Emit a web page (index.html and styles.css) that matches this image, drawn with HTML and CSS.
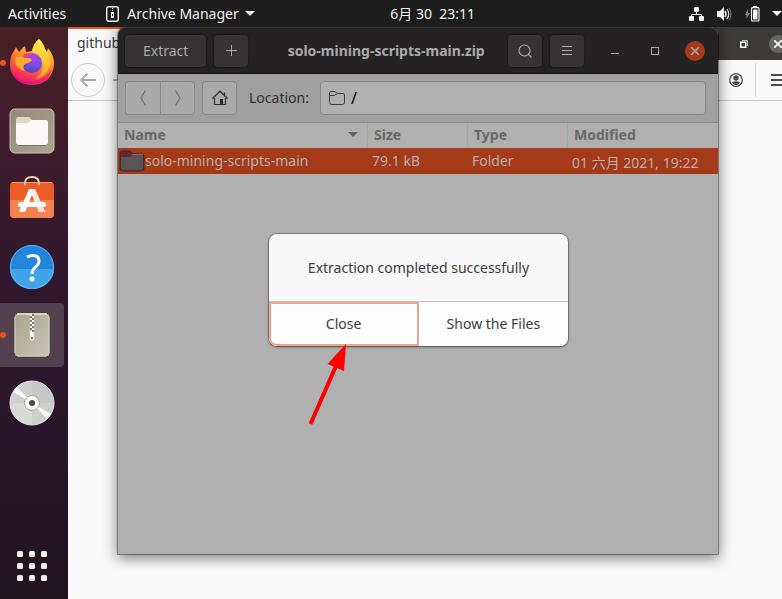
FILE: index.html
```html
<!DOCTYPE html>
<html lang="en">
<head>
<meta charset="utf-8">
<title>Archive Manager</title>
<link rel="stylesheet" href="styles.css">
</head>
<body>
<header class="topbar">
  <button class="top-item">Activities</button>
  <button class="top-item app-menu">
    <svg width="13" height="16" viewBox="0 0 13 16"><rect x=".7" y=".7" width="11.6" height="14.6" rx="2" fill="none" stroke="#f2f2f2" stroke-width="1.4"/><path d="M6 2h1v1H6zM6 4h1v1H6z" fill="#f2f2f2"/><path d="M5 6h3v6H5z" fill="#f2f2f2"/><path d="M6 8h1v2H6z" fill="#1d1d1d"/></svg>
    <span>Archive Manager</span>
    <svg width="10" height="5" viewBox="0 0 10 5"><path d="M0 0h10L5 5z" fill="#f2f2f2"/></svg>
  </button>
  <button class="top-item clock">6月 30&nbsp; 23:11</button>
  <button class="top-item tray" aria-label="System menu">
    <svg width="16" height="14" viewBox="0 0 16 14" fill="#f2f2f2"><rect x="5" y="0" width="5" height="5" rx="1"/><rect x="0" y="9" width="5" height="5" rx="1"/><rect x="10" y="9" width="5" height="5" rx="1"/><path d="M2.500 10V7.500h10V10M7.500 4v3.500" fill="none" stroke="#f2f2f2"/></svg>
    <svg width="16" height="14" viewBox="0 0 16 14"><path d="M0 4h3l4-4v14L3 10H0z" fill="#f2f2f2"/><path d="M8 4q2 3 0 6" fill="none" stroke="#f2f2f2" stroke-width="1.500"/><path d="M10 2q3.500 5 0 10" fill="none" stroke="#d0d0d0" stroke-width="1.300"/><path d="M12 1q4 6 0 12" fill="none" stroke="#777"/></svg>
    <svg width="15" height="16" viewBox="0 0 15 16"><path d="M3 3v4h2L1.500 13V9H0z" fill="#888"/><path d="M8 0h4v2H8z" fill="#f2f2f2"/><rect x="6.500" y="1.700" width="7.500" height="13.300" rx="1" fill="none" stroke="#f2f2f2" stroke-width="1.200"/><path d="M8 3.500h4.500v10H8z" fill="#f2f2f2"/></svg>
    <svg width="10" height="5" viewBox="0 0 10 5"><path d="M0 0h10L5 5z" fill="#f2f2f2"/></svg>
  </button>
</header>
<div class="desktop">
  <nav class="dock" aria-label="Dock">
    <button class="dock-item running" aria-label="Firefox">
      <svg width="46" height="48" viewBox="0 1 46 48">
        <defs>
          <linearGradient id="fx1" x1=".75" y1="0" x2=".35" y2="1"><stop offset="0" stop-color="#ffe34a"/><stop offset=".4" stop-color="#ff9a2a"/><stop offset=".72" stop-color="#ff4a45"/><stop offset="1" stop-color="#e5107c"/></linearGradient>
          <linearGradient id="fx2" x1=".6" y1="0" x2=".5" y2="1"><stop offset="0" stop-color="#fff44f"/><stop offset="1" stop-color="#ffad2c"/></linearGradient>
          <radialGradient id="fx3" cx=".6" cy=".2" r=".85"><stop offset="0" stop-color="#b83ff2"/><stop offset=".55" stop-color="#7150dc"/><stop offset="1" stop-color="#5140b6"/></radialGradient>
        </defs>
        <path d="M30 1c3 3 5 6 6 10l2 3 1-4c4 5 6 10 6 15 0 13-9 22-22 22S1 38 1 26c0-5 1-9 4-13l2-4 3 5c2-2 3-4 6-6l1 6 6-1C24 8 26 4 30 1z" fill="url(#fx1)"/>
        <path d="M30 1c3 3 5 6 6 10 3 4 5 8 5 14-1 9-7 15-15 16 6-4 9-10 7-16-1-5-5-7-10-12 1-5 3-9 7-12z" fill="url(#fx2)" opacity=".8"/>
        <circle cx="23" cy="25" r="10" fill="url(#fx3)"/>
        <path d="M7 19c4 0 8 0 10 1 2 0 5 0 6 2-2 3-6 3-8 5-1 2-1 4 1 6-5-1-9-5-10-9z" fill="#ffab31"/>
        <path d="M15 16c3-1 6-1 8 0-3 1-5 3-5 4l-4-1z" fill="#e83f76"/>
        <path d="M2 31c4 9 11 13 20 12 11 0 18-6 21-13-2 10-10 17-20 17C12 47 4 41 2 31z" fill="#e5107c" opacity=".6"/>
      </svg>
    </button>
    <button class="dock-item" aria-label="Files">
      <svg width="46" height="46" viewBox="0 0 46 46"><defs><linearGradient id="fl" x1="0" y1="0" x2="1" y2="1"><stop offset="0" stop-color="#918a79"/><stop offset="1" stop-color="#aaa491"/></linearGradient></defs><rect x="1" y="1" width="44" height="44" rx="5" fill="url(#fl)" stroke="#c9c3b2"/><path d="M7 11q0-2 2-2h11l4 4-2 4H7z" fill="#dcd8c9"/><path d="M7 15h12l4-3h14q2 0 2 2v20q0 3-3 3H10q-3 0-3-3z" fill="#f9f8f6"/><path d="M9 37.500h28" stroke="#777262"/></svg>
    </button>
    <button class="dock-item" aria-label="Ubuntu Software">
      <svg width="46" height="46" viewBox="0 2 46 46"><rect x="1" y="8" width="44" height="36" rx="4" fill="#ed5c27"/><path d="M1 26h44v14q0 4-4 4H5q-4 0-4-4z" fill="#f38350"/><path d="M3 8.500h40" stroke="#ff9b68"/><path d="M16 11V9.500q0-6.500 7-6.500t7 6.500V11" fill="none" stroke="#f3d6a8" stroke-width="1.800"/><path d="M20 15h6l10 23h-6L23 21l-7 17h-6z" fill="#fff"/><path d="M23 15h3l10 23h-6z" fill="#f6e3da"/><rect x="9" y="28" width="28" height="5" rx="2.500" fill="#fff"/></svg>
    </button>
    <button class="dock-item" aria-label="Help">
      <svg width="46" height="46" viewBox="0 0 46 46"><circle cx="23" cy="23" r="22" fill="#2187dc"/><path d="M1 25h44a22 20 0 0 1-44 0z" fill="#41a3e8"/><circle cx="23" cy="23" r="21.500" fill="none" stroke="#68b6ed"/><path d="M18 13q4-2 7-1.500 5 .5 5 5.500 0 3-4 6.500-3 3-3 6.500" fill="none" stroke="#fff" stroke-width="3"/><circle cx="23" cy="35" r="2.500" fill="#fff"/></svg>
    </button>
    <button class="dock-item running active" aria-label="Archive Manager">
      <svg width="38" height="46" viewBox="0 0 38 46"><defs><linearGradient id="ar" x1="0" y1="0" x2="1" y2="1"><stop offset="0" stop-color="#aaa38f"/><stop offset="1" stop-color="#c9c5b5"/></linearGradient></defs><rect x="1" y="1" width="36" height="44" rx="4" fill="url(#ar)" stroke="#4a4039"/><path d="M4 2h30" stroke="#efede4" stroke-width="1.500"/><path d="M4 44h30M2 5v36M36 5v36" stroke="#d8d4c6"/><path d="M17 2h4v26h-4z" fill="#7d7868"/><path d="M18 2v20" stroke="#fff" stroke-width="2" stroke-dasharray="2 2"/><path d="M20 4v18" stroke="#fff" stroke-width="2" stroke-dasharray="2 2"/><path d="M17 20h4v8h-4z" fill="#fff"/><path d="M18 25h2v2h-2z" fill="#7d7868"/></svg>
    </button>
    <button class="dock-item" aria-label="Disc">
      <svg width="46" height="46" viewBox="0 0 46 46"><circle cx="23" cy="23" r="22" fill="#cfcfcf" stroke="#e6e6e6"/><path d="M23 23V1a22 22 0 0 1 22 22z" fill="#c7c7c7"/><path d="M23 23V45A22 22 0 0 1 1 23z" fill="#d9d9d9"/><path d="M23 23 4 12q2-4 4-5zM23 23l19 11q-2 4-4 5z" fill="#f7f7f7"/><circle cx="23" cy="23" r="7.500" fill="#fafafa" stroke="#aaa28e"/><circle cx="23" cy="23" r="3" fill="#4a4a48"/></svg>
    </button>
    <button class="dock-item apps" aria-label="Show Applications">
      <svg width="30" height="30" viewBox="0 0 30 30" fill="#f0eeee"><rect width="6" height="6" rx="1.500"/><rect x="12" width="6" height="6" rx="1.500"/><rect x="24" width="6" height="6" rx="1.500"/><rect y="12" width="6" height="6" rx="1.500"/><rect x="12" y="12" width="6" height="6" rx="1.500"/><rect x="24" y="12" width="6" height="6" rx="1.500"/><rect y="24" width="6" height="6" rx="1.500"/><rect x="12" y="24" width="6" height="6" rx="1.500"/><rect x="24" y="24" width="6" height="6" rx="1.500"/></svg>
    </button>
  </nav>
  <main class="workspace">
    <section class="browser" aria-label="Browser">
      <div class="tabstrip">
        <div class="tab">github</div>
        <button class="browser-restore" aria-label="Restore"><svg width="8" height="8" viewBox="0 0 8 8" fill="none"><path d="M2 .5h5.500V6" stroke="#bbb"/><rect x=".75" y="2.250" width="5" height="5" stroke="#fff" stroke-width="1.500"/></svg></button>
        <button class="browser-close" aria-label="Close browser"><svg width="8" height="8" viewBox="0 0 8 8"><path d="m0 0 8 8M8 0 0 8" stroke="#fff" stroke-width="1.600"/></svg></button>
      </div>
      <div class="navbar">
        <button class="back" aria-label="Back"><svg width="16" height="14" viewBox="0 0 16 14"><path d="M16 7H1M7.500 0.500 1 7l6.500 6.500" fill="none" stroke="#a8a8a8" stroke-width="1.800"/></svg></button>
        <button class="plain" aria-label="Forward"><svg width="16" height="14" viewBox="0 0 16 14"><path d="M0 7h15M8.500.5 15 7l-6.500 6.500" fill="none" stroke="#aaa" stroke-width="1.800"/></svg></button>
        <button class="plain account" aria-label="Account"><svg width="14" height="14" viewBox="0 0 14 14"><circle cx="7" cy="7" r="6.300" fill="none" stroke="#4c4c4c" stroke-width="1.300"/><circle cx="7" cy="5" r="2.700" fill="#4c4c4c"/><path d="M3 9q4-1.500 8 0-1 3-4 3T3 9z" fill="#4c4c4c"/></svg></button>
        <button class="plain main-menu" aria-label="Menu"><svg width="16" height="12" viewBox="0 0 16 12"><path d="M0 1h16M0 6h16M0 11h16" stroke="#4c4c4c" stroke-width="2"/></svg></button>
      </div>
    </section>

    <section class="window" aria-label="solo-mining-scripts-main.zip">
      <header class="titlebar">
        <button class="tool">Extract</button>
        <button class="tool square" aria-label="Add files"><svg width="11" height="11" viewBox="0 0 11 11"><path d="M0 5.500h11M5.500 0v11" stroke="#aaa"/></svg></button>
        <h1 class="title">solo-mining-scripts-main.zip</h1>
        <button class="tool square" aria-label="Search"><svg width="14" height="14" viewBox="0 0 14 14" fill="none" stroke="#aaa" stroke-width="1.200"><circle cx="6.500" cy="6.500" r="5.500"/><path d="m10 10 3.500 3.500"/></svg></button>
        <button class="tool square" aria-label="Menu"><svg width="10" height="10" viewBox="0 0 10 10"><path d="M0 .5h10M0 4.500h10M0 8.500h10" stroke="#b0b0b0"/></svg></button>
        <div class="controls">
          <button class="control" aria-label="Minimize"><svg width="8" height="8" viewBox="0 0 8 8"><path d="M0 6.500h8" stroke="#aaa"/></svg></button>
          <button class="control" aria-label="Maximize"><svg width="8" height="8" viewBox="0 0 8 8"><rect x=".5" y=".5" width="7" height="7" fill="none" stroke="#aaa"/></svg></button>
          <button class="control close" aria-label="Close window"><svg width="8" height="8" viewBox="0 0 8 8"><path d="m0 0 8 8M8 0 0 8" stroke="#b0a09a" stroke-width="1.600"/></svg></button>
        </div>
      </header>
      <div class="locationbar">
        <div class="nav-pair">
          <button class="nav" aria-label="Back"><svg width="6" height="16" viewBox="0 0 6 16"><path d="M5.500.5 1 8l4.500 7.500" fill="none" stroke="#707070" stroke-width="1.200"/></svg></button>
          <button class="nav" aria-label="Forward"><svg width="6" height="16" viewBox="0 0 6 16"><path d="M.5.5 5 8 .5 15.500" fill="none" stroke="#707070" stroke-width="1.200"/></svg></button>
        </div>
        <button class="nav home" aria-label="Home"><svg width="16" height="16" viewBox="0 0 16 16"><path d="M.5 8.500 8 1.200l7.500 7.300M2.500 8v6.500h11V8M12.500 5V2.500" fill="none" stroke="#2c2c2c" stroke-width="1.200"/><path d="M8 9h3v5H8z" fill="#2c2c2c"/></svg></button>
        <label for="location">Location:</label>
        <div class="field">
          <svg width="16" height="14" viewBox="0 0 16 14"><path d="M.5 4V2q0-1.500 1.500-1.500h4L8 2.500h6q1.500 0 1.500 1.500v7.500q0 2-2 2h-11q-2 0-2-2zM.5 4.500H5q1.500 0 3-2" fill="none" stroke="#3c3c3c"/></svg>
          <input id="location" type="text" value="/">
        </div>
      </div>
      <table class="files">
        <colgroup><col><col class="col"><col class="col"><col class="col-wide"></colgroup>
        <thead><tr>
          <th><div class="sort">Name <svg width="10" height="5" viewBox="0 0 10 5"><path d="M0 0h10L5 5z" fill="#606060"/></svg></div></th>
          <th>Size</th><th>Type</th><th>Modified</th>
        </tr></thead>
        <tbody><tr>
          <td><div class="name"><svg width="26" height="22" viewBox="0 0 26 22"><path d="M1 3q0-2 2-2h8l3 3h9q2 0 2 2v13q0 2-2 2H3q-2 0-2-2z" fill="#6b2437" stroke="#332c2b"/><path d="M2 7h9l3-2h10v13q0 2-2 2H4q-2 0-2-2z" fill="#565656"/><path d="M13 4.500h11" stroke="#a75b45"/></svg>solo-mining-scripts-main</div></td>
          <td>79.1 kB</td><td>Folder</td><td class="date">01 六月 2021, 19:22</td>
        </tr></tbody>
      </table>
      <div class="overlay">
        <div class="dialog" role="dialog" aria-label="Extraction completed successfully">
          <p class="message">Extraction completed successfully</p>
          <div class="actions">
            <button class="action focused">Close</button>
            <button class="action">Show the Files</button>
          </div>
          <svg class="arrow" width="40" height="84" viewBox="0 0 40 84"><path d="M2.500 80 28 22" stroke="#f00" stroke-width="4"/><path d="M38 0 19.500 20 36 27z" fill="#f00"/></svg>
        </div>
      </div>
    </section>
  </main>
</div>
</body>
</html>
```
FILE: styles.css
```css
* {
  box-sizing: border-box;
}

body {
  margin: 0;
  height: 100vh;
  display: flex;
  flex-direction: column;
  overflow: hidden;
  background: #f9f9f9;
  color: #3c3c3c;
  font: 14px/20px "Noto Sans", "Noto Sans CJK SC", sans-serif;
}

button,
input {
  margin: 0;
  padding: 0;
  border: 0;
  background: none;
  color: inherit;
  font: inherit;
}

svg {
  display: block;
  flex: none;
}

.topbar {
  flex: none;
  height: 27px;
  display: flex;
  align-items: center;
  padding-left: 8px;
  background: #1d1d1d;
  color: #f2f2f2;
}

.top-item {
  display: flex;
  align-items: center;
  white-space: nowrap;
}

.app-menu {
  gap: 8px;
  margin-left: 40px;
}

.app-menu span {
  margin-right: -2px;
}

.clock {
  margin-left: auto;
}

.tray {
  gap: 12px;
  margin-left: 214px;
}

.desktop {
  flex: 1;
  min-height: 0;
  display: flex;
}

.dock {
  flex: none;
  width: 68px;
  display: flex;
  flex-direction: column;
  gap: 4px;
  padding: 4px 4px 1px 0;
  background: linear-gradient(#482026, #3e1b2b 22%, #32182e 42%, #29152a 70%, #21141d);
}

.dock-item {
  height: 64px;
  display: grid;
  place-items: center;
  position: relative;
}

.dock-item.active {
  background: #54414f;
  border-radius: 0 4px 4px 0;
}

.dock-item.running::before {
  content: "";
  position: absolute;
  left: 0;
  top: 29px;
  width: 6px;
  height: 6px;
  border-radius: 50%;
  background: #e95420;
}

.apps {
  margin-top: auto;
}

.workspace {
  flex: 1;
  min-width: 0;
  position: relative;
  overflow: hidden;
}

.browser {
  margin-right: -12px;
}

.tabstrip {
  height: 33px;
  display: flex;
  align-items: center;
  padding-right: 7px;
  background: #3c3b39;
}

.tab {
  align-self: stretch;
  width: 220px;
  padding: 4px 9px;
  border-top: 2px solid #e95420;
  background: #f9f9f9;
}

.browser-restore {
  margin-left: auto;
  margin-right: 21px;
}

.browser-close {
  width: 18px;
  height: 18px;
  display: grid;
  place-items: center;
  border-radius: 50%;
  background: #666563;
}

.navbar {
  height: 41px;
  display: flex;
  align-items: center;
  gap: 8px;
  padding: 0 7px 0 3px;
  border-bottom: 1px solid #c4c4c4;
}

.back {
  width: 34px;
  height: 34px;
  display: grid;
  place-items: center;
  border: 1px solid #cfcfcf;
  border-radius: 50%;
}

.account {
  margin-left: auto;
  margin-right: 4px;
}

.main-menu {
  height: 34px;
  display: flex;
  align-items: center;
  padding-left: 15px;
  border-left: 1px solid #d8d8d8;
}

.window {
  position: absolute;
  inset: 0 64px 45px 50px;
  display: flex;
  flex-direction: column;
  border-radius: 8px 8px 0 0;
  background: #b0b0b0;
  box-shadow: 0 0 0 1px rgb(0 0 0 / 35%), 0 3px 14px 1px rgb(0 0 0 / 50%);
}

.titlebar {
  height: 47px;
  display: flex;
  align-items: center;
  gap: 8px;
  padding: 0 13px 0 7px;
  border-top: 1px solid #333131;
  border-bottom: 1px solid #111;
  border-radius: 8px 8px 0 0;
  background: #242222;
  color: #aaa;
}

.tool {
  height: 32px;
  display: grid;
  place-items: center;
  padding: 0 18px;
  border-radius: 4px;
  background: #353333;
  box-shadow: 0 0 1px 1px #1c1a1a;
}

.square {
  width: 34px;
  padding: 0;
}

.title {
  flex: 1;
  margin: 0;
  padding-left: 16px;
  font-size: 14px;
  line-height: 20px;
  text-align: center;
  white-space: nowrap;
}

.controls {
  display: flex;
  gap: 20px;
  margin-left: 13px;
}

.control {
  width: 20px;
  height: 20px;
  display: grid;
  place-items: center;
  border-radius: 50%;
}

.control.close {
  background: #a43a17;
}

.locationbar {
  height: 49px;
  display: flex;
  align-items: center;
  gap: 7px;
  padding: 0 12px 0 7px;
  border-bottom: 1px solid #868686;
  background: #a0a0a0;
  color: #303030;
}

.nav-pair {
  display: flex;
}

.nav {
  width: 35px;
  height: 34px;
  display: grid;
  place-items: center;
  border: 1px solid #868686;
  border-radius: 4px;
  background: #aaa;
}

.nav-pair .nav:first-child {
  border-right: 0;
  border-radius: 4px 0 0 4px;
}

.nav-pair .nav:last-child {
  border-radius: 0 4px 4px 0;
}

.locationbar label {
  margin: 0 4px 0 5px;
}

.field {
  flex: 1;
  height: 34px;
  min-width: 0;
  display: flex;
  align-items: center;
  gap: 6px;
  padding: 0 8px;
  border: 1px solid #868686;
  border-radius: 4px;
  background: #b0b0b0;
}

.field input {
  flex: 1;
  min-width: 0;
  color: #000;
  font-size: 16px;
}

.files {
  width: 100%;
  table-layout: fixed;
  border-spacing: 0;
}

.col {
  width: 100px;
}

.col-wide {
  width: 150px;
}

.files th {
  height: 25px;
  padding: 0 6px 2px;
  border-right: 1px solid #a6a6a6;
  color: #686868;
  text-align: left;
}

.files th:last-child {
  border-right: 0;
}

.sort {
  display: flex;
  align-items: center;
  justify-content: space-between;
  padding-right: 3px;
}

.files td {
  height: 26px;
  padding: 0 4px;
  background: #a43a17;
  color: #bbb0ac;
  white-space: nowrap;
}

.files td:first-child {
  padding: 0 1px;
}

.files .date {
  padding-top: 4px;
}

.name {
  display: flex;
  align-items: center;
}

.overlay {
  position: absolute;
  inset: 0 0 2px 1px;
  display: grid;
  place-items: center;
}

.dialog {
  position: relative;
  width: 50%;
  border-radius: 8px;
  background: #f7f7f7;
  box-shadow: 0 0 0 1px rgb(0 0 0 / 25%), 0 1px 3px rgb(0 0 0 / 40%);
}

.message {
  margin: 0;
  padding: 24px 0 23px;
  text-align: center;
}

.actions {
  display: grid;
  grid-template-columns: 1fr 1fr;
  border-top: 1px solid #c4c4c4;
}

.action {
  height: 44px;
  background: #fdfdfd;
  border-radius: 0 0 8px 0;
}

.action.focused {
  border-radius: 0 0 0 8px;
  box-shadow: inset 0 0 0 2px #f0a487, 1px 0 0 #c4c4c4;
}

.arrow {
  position: absolute;
  left: 39px;
  top: 110px;
}
```
